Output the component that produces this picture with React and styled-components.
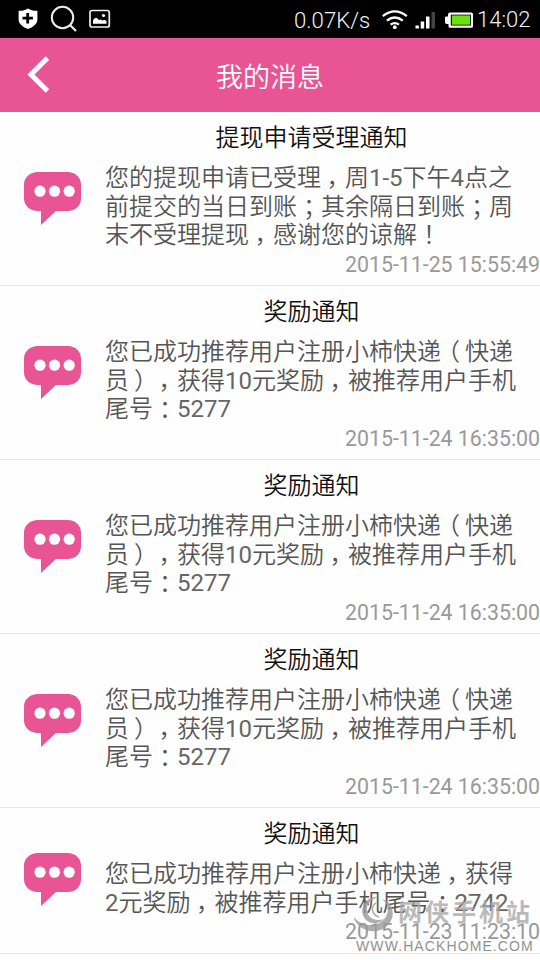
import styled, { createGlobalStyle } from 'styled-components'


const reward = {
	title: '奖励通知',
	lines: ['您已成功推荐用户注册小柿快递（快递', '员），获得10元奖励，被推荐用户手机', '尾号：5277'],
	time: '2015-11-24 16:35:00',
}

const messages = [
	{
		title: '提现申请受理通知',
		lines: ['您的提现申请已受理，周1-5下午4点之', '前提交的当日到账；其余隔日到账；周', '末不受理提现，感谢您的谅解！'],
		time: '2015-11-25 15:55:49',
	},
	reward,
	reward,
	reward,
	{
		title: '奖励通知',
		lines: ['您已成功推荐用户注册小柿快递，获得', '2元奖励，被推荐用户手机尾号：2742'],
		time: '2015-11-23 11:23:10',
	},
]

const shifts = {
	'（': [-5, 0],
	'）': [5, 0],
	'，': [-1, 7],
	'；': [0, 2],
	'：': [0, 2],
	'！': [0, 0],
}

// full-width punctuation sits in the middle of its cell
const Line = ({ text }) => (
	<TextLine>
		{text.split(/([，；：！（）]|[\d-]+)/).map((part, index) => {
			if (index % 2 === 0) return part
			if (!shifts[part]) return <Digits key={index}>{part}</Digits>

			const [x, y] = shifts[part]
			return <Punctuation key={index} lang="zh-TW" $x={x} $y={y}>{part}</Punctuation>
		})}
	</TextLine>
)

const StatusBar = () => (
	<StatusContainer>
		<svg width="115" height="38" viewBox="0 0 115 38" fill="none">
			<path d="M28 8.500c3 2 6 2.500 9.400 2.300v8.700c0 4.700-4.600 7.700-9.400 9.600c-4.800-1.900-9.400-4.900-9.400-9.600v-8.700c3.400.2 6.400-.3 9.400-2.300z" fill="#fff" />
			<path d="M27.700 13v10.400M22.500 18.200h10.400" stroke="#000" strokeWidth="2.800" />
			<circle cx="62.500" cy="17.500" r="10.700" stroke="#eee" strokeWidth="2" />
			<path d="M70 25l6 6" stroke="#eee" strokeWidth="2.200" />
			<rect x="90" y="10.500" width="19.300" height="16.500" rx="2" stroke="#eee" strokeWidth="1.700" />
			<path d="M93 23.800v-3.500c2-3.500 4-3.500 6 0c1.500-1.500 2.500-.8 3 .5c1.500-1.200 3.500-.8 4.500.5v2.500z" fill="#fff" />
			<circle cx="103.500" cy="15.500" r="1.600" fill="#fff" />
		</svg>

		<StatusRight>
			<Speed>0.07K/s</Speed>
			<svg width="99" height="38" viewBox="378 0 99 38" fill="none">
				<path d="M382.800 16.200q12-9.600 24 0M386.800 20.600q8-6.200 16 0M390.600 24.700q4.200-3.200 8.400 0" stroke="#fff" strokeWidth="2.300" />
				<circle cx="394.800" cy="27.200" r="1.900" fill="#fff" />
				<path d="M415.500 25.500h3.400v3h-3.400zM420.700 21.500h3.500v7h-3.500zM426 16.500h3.500v12h-3.500z" fill="#fff" />
				<path d="M431.500 12h3.500v16.500h-3.500z" fill="#444" />
				<path d="M450 12.500h21.200q1.800 0 1.800 1.800v11.900q0 1.500-1.500 1.500h-21.500q-1.500 0-1.500-1.500v-2.200h-1.700q-1.800 0-1.800-1.800v-4.500q0-1.300 1.300-1.300h1.700v-1.700q0-2.200 2-2.200z" fill="#fff" />
				<rect x="450.800" y="14.600" width="20.200" height="11" fill="#102000" />
				<rect x="452" y="15.500" width="18" height="9.200" fill="#6be20b" />
			</svg>
			<Clock>14:02</Clock>
		</StatusRight>
	</StatusContainer>
)

const BubbleIcon = () => (
	<svg width="58" height="54" viewBox="0 0 58 54">
		<path d="M14 0h29.500c8 0 13.500 5.500 13.500 12.500v14c0 7-5.500 12.500-13.500 12.500h-11.500l-15 14v-14h-3c-8 0-14-5.500-14-12.500v-14c0-7 6-12.500 14-12.500z" fill="#e95494" />
		<circle cx="16" cy="19.200" r="5.600" fill="#fff" />
		<circle cx="30.500" cy="19.200" r="5.600" fill="#fff" />
		<circle cx="45.200" cy="19.200" r="5.600" fill="#fff" />
	</svg>
)

const MessageItem = ({ message }) => {
	const { title, lines, time } = message

	return (
		<ItemContainer>
			<IconBox>
				<BubbleIcon />
			</IconBox>

			<DescriptionBox>
				<Title>{title}</Title>
				{lines.map((line, index) => <Line key={index} text={line} />)}
				<Time>{time}</Time>
			</DescriptionBox>
		</ItemContainer>
	)
}

const App = () => (
	<Page lang="zh-CN">
		<GlobalStyle />
		<StatusBar />

		<Header>
			<BackIcon width="24" height="38" viewBox="0 0 24 38" fill="none">
				<path d="M20.500 2L4 18.500L20.500 35" stroke="#fff" strokeWidth="5" />
			</BackIcon>
			<HeaderTitle>我的消息</HeaderTitle>
		</Header>

		{messages.map((message, index) => <MessageItem key={index} message={message} />)}

		<Watermark>
			<svg width="41" height="44" viewBox="0 0 41 44">
				<path d="M24 7C13 6 6 16 9 25C12 34 23 36 30 29C21 32 14 28 13 21C12 15 17 9 24 7z" fill="#999" />
				<path d="M28 9C41 13 42 29 32 37C20 46 3 40 -1 26C5 34 14 37 23 34C34 30 38 17 28 9z" fill="#999" />
				<path d="M22 13C16 17 18 25 25 27" stroke="#999" strokeWidth="1.500" fill="none" />
			</svg>
			<WatermarkName>网侠手机站</WatermarkName>
			<WatermarkUrl>WWW.HACKHOME.COM</WatermarkUrl>
		</Watermark>
	</Page>
)


export default App


const GlobalStyle = createGlobalStyle`
	body {
		margin: 0;
		background: #fff;
	}

	svg {
		display: block;
		flex-shrink: 0;
	}
`

const Page = styled.div`
	position: relative;
	width: 540px;
	height: 960px;
	overflow: hidden;

	background: #fefefe;
	font-family: Roboto, 'Noto Sans CJK SC', sans-serif;
	font-weight: 350;
	white-space: nowrap;
`

const StatusContainer = styled.div`
	height: 38px;

	display: flex;
	justify-content: space-between;

	background: #000;
	color: #f2f2f2;
`

const StatusRight = styled.div`
	display: flex;
	line-height: 40px;
`

const Speed = styled.span`
	width: 84px;

	font-size: 22.200px;
`

const Clock = styled.span`
	width: 63px;

	font-size: 22px;
`

const Header = styled.div`
	height: 74px;

	display: grid;
	grid-template-columns: 50px 1fr 50px;
	align-items: center;

	background: #e95494;
`

const BackIcon = styled.svg`
	margin-left: 26.500px;
`

const HeaderTitle = styled.span`
	padding-top: 6px;

	font-size: 27px;
	line-height: 68px;
	text-align: center;
	color: #fff;
`

const ItemContainer = styled.div`
	display: flex;
	align-items: center;

	border-bottom: 1px solid #e6e6e6;
`

const IconBox = styled.div`
	width: 105px;
	padding-left: 24px;
	box-sizing: border-box;
`

const DescriptionBox = styled.div`
	flex: 1;
	padding: 9px 0 6.500px;

	display: flex;
	flex-direction: column;
`

const Title = styled.span`
	width: 413px;
	margin-bottom: 6px;

	font-size: 24px;
	line-height: 35px;
	text-align: center;
	color: #111;
`

const TextLine = styled.span`
	height: 28.500px;

	font-size: 24px;
	line-height: 28.500px;
	color: #555;
`

const Digits = styled.span`
	font-weight: 400;
	color: #666;
`

const Punctuation = styled.span`
	display: inline-block;
	transform: translate(${({ $x, $y }) => `${$x}px, ${$y}px`});

	font-family: 'Noto Sans CJK TC', sans-serif;
`

const Time = styled.span`
	margin-top: 3px;

	font-size: 21.300px;
	line-height: 28px;
	font-weight: 400;
	text-align: right;
	color: #999;
`

const Watermark = styled.div`
	position: absolute;
	left: 354px;
	top: 890px;
	width: 182px;

	display: grid;
	grid-template-columns: 44px 1fr;

	opacity: 0.8;
	color: #999;
`

const WatermarkName = styled.span`
	font-size: 24px;
	line-height: 46px;
	font-weight: 700;
	letter-spacing: 3px;
	color: #aaa;
`

const WatermarkUrl = styled.span`
	grid-column: 1 / 3;
	margin: 1px 0 0 2px;

	font-family: 'Liberation Sans', sans-serif;
	font-size: 14px;
	line-height: 18px;
	letter-spacing: 1.100px;
	color: #777;
`
